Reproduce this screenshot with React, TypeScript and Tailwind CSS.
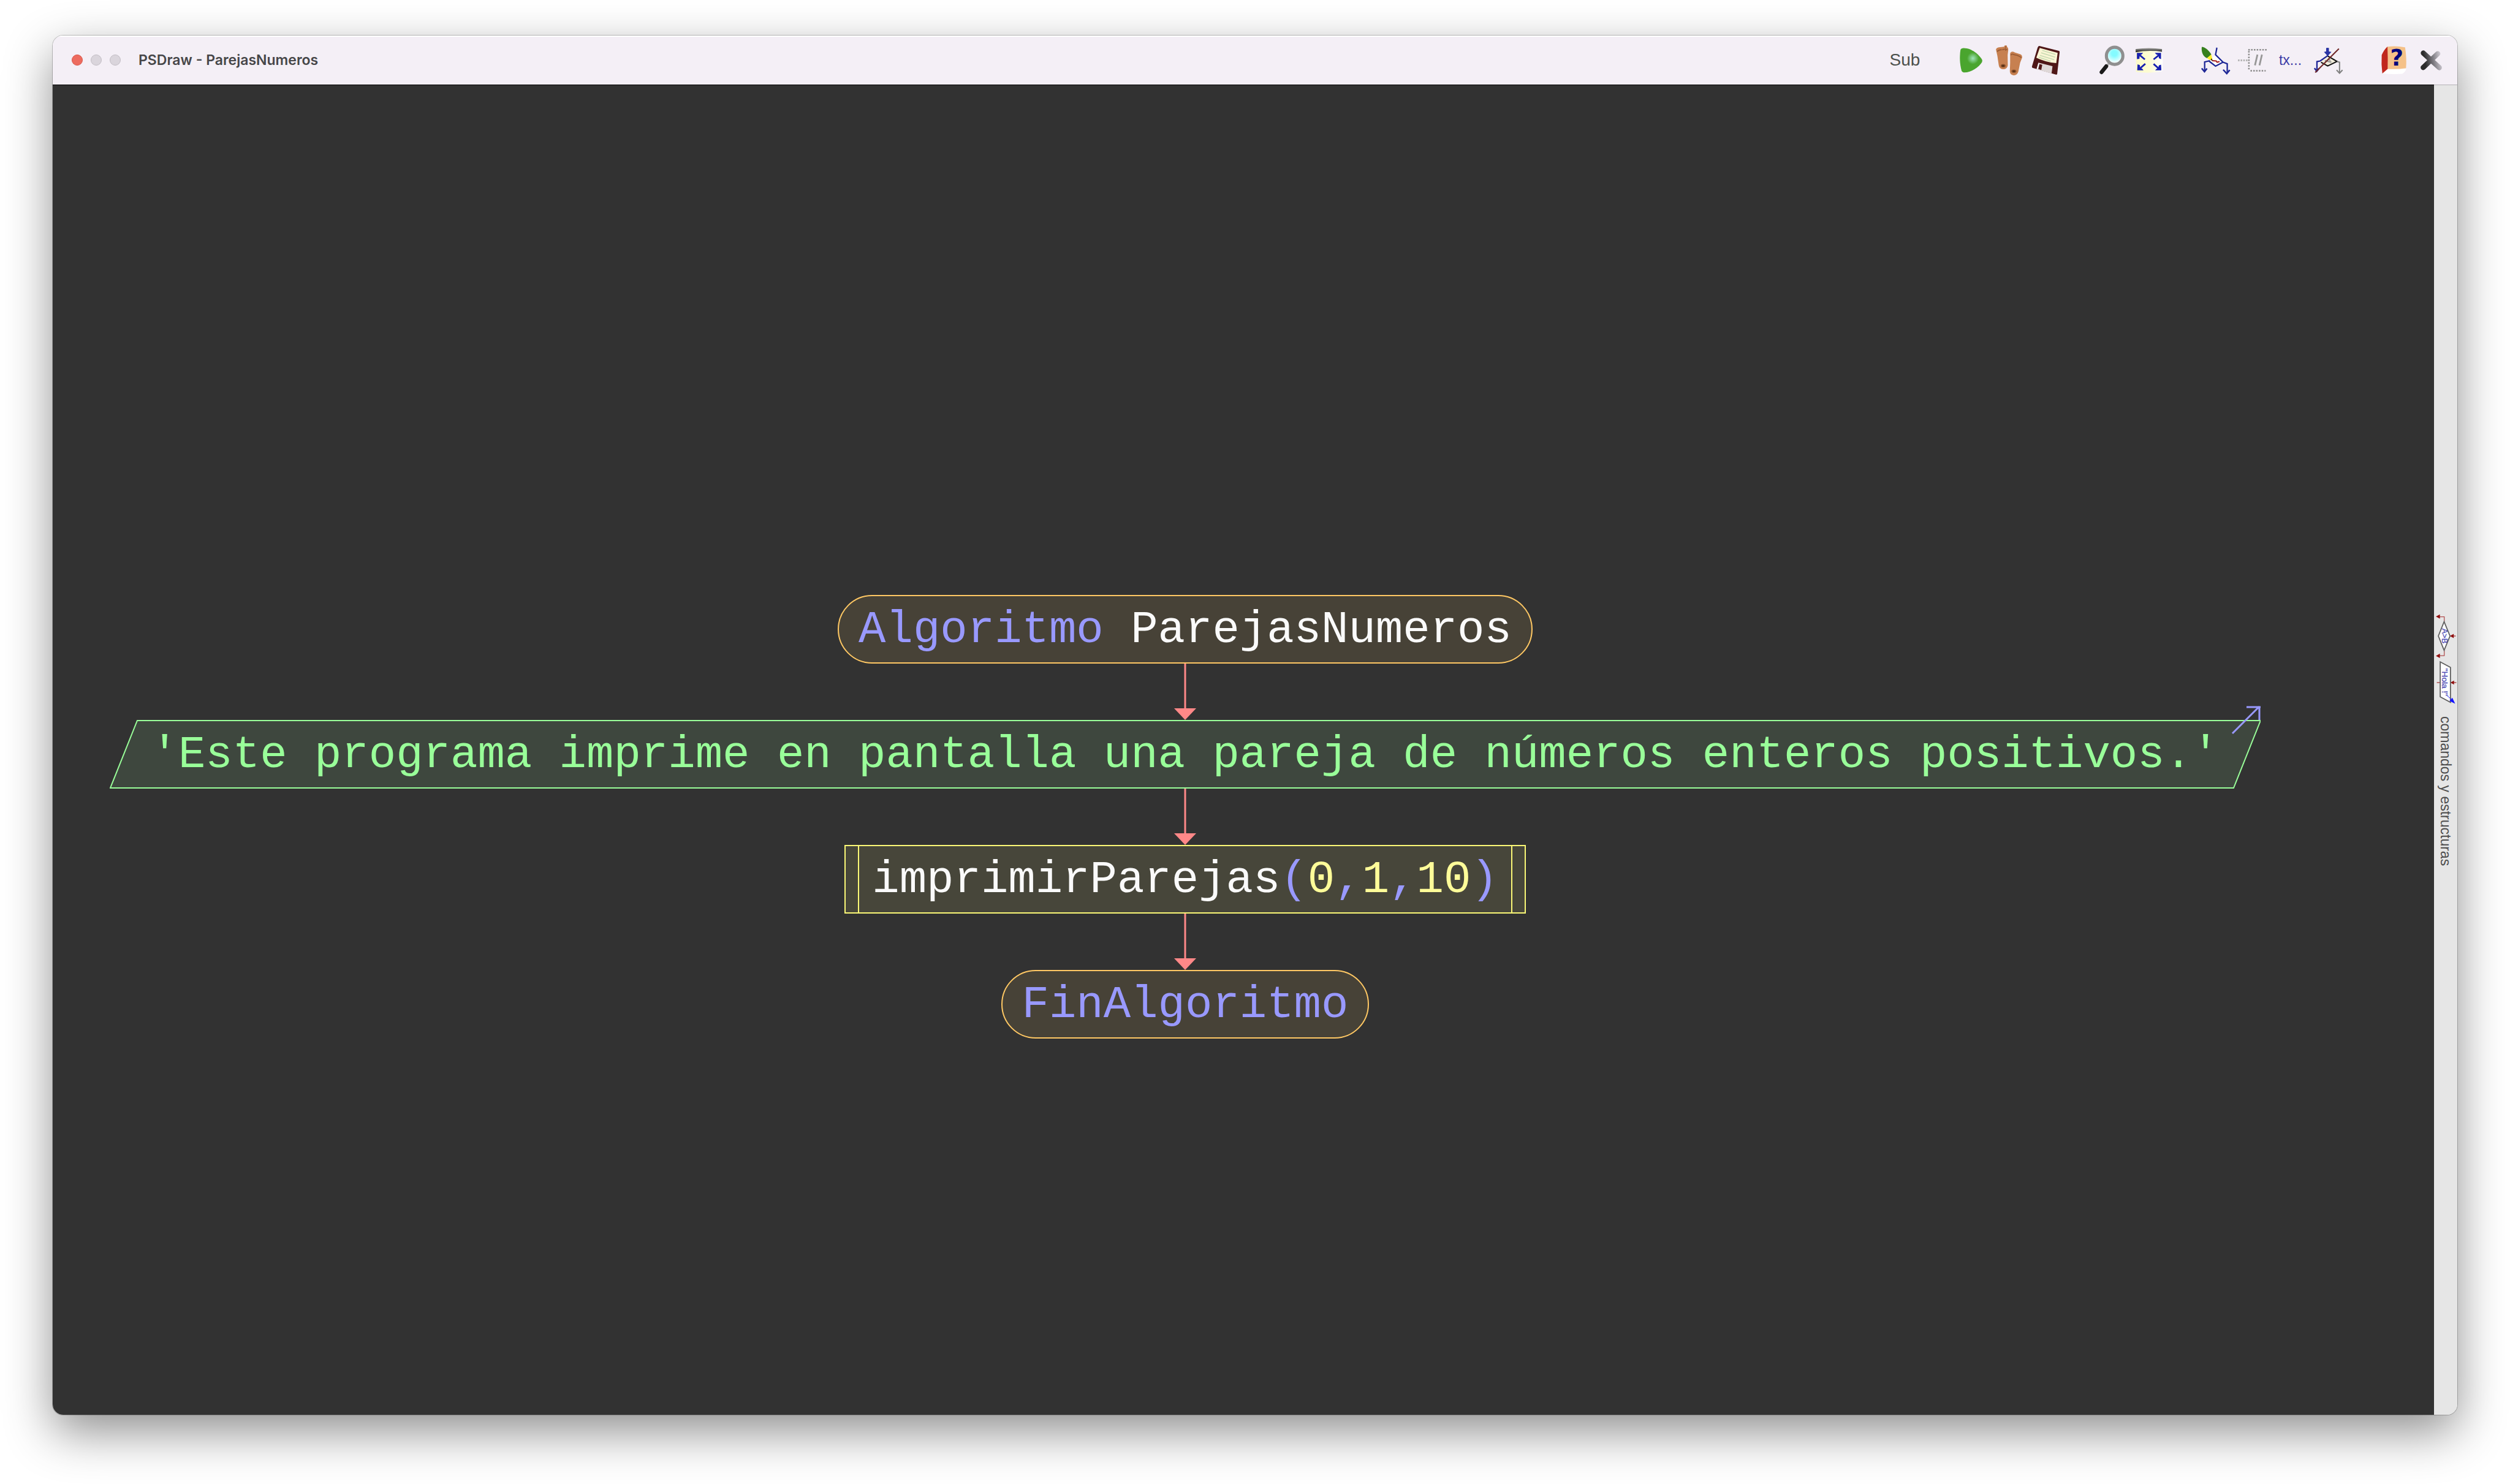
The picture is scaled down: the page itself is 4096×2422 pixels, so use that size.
import type { ReactNode } from "react";

function ToolButton({ label, children }: { label: string; children: ReactNode }) {
  return (
    <button
      type="button"
      aria-label={label}
      title={label}
      className="flex h-[61px] w-[61px] shrink-0 items-center justify-center"
    >
      {children}
    </button>
  );
}

function Glyph({ x, children }: { x: number; children: ReactNode }) {
  return (
    <svg viewBox={`${x} 54 240 240`} className="h-full w-full" fill="none" aria-hidden="true">
      {children}
    </svg>
  );
}

function PlayIcon() {
  return (
    <Glyph x={498}>
      <defs>
        <radialGradient id="playShine" gradientUnits="userSpaceOnUse" cx="630" cy="161" r="38">
          <stop offset="0" stopColor="#9fe3bb" />
          <stop offset="1" stopColor="#4aa52e" />
        </radialGradient>
      </defs>
      <path
        d="M565 96 C620 92 668 138 688 168 Q693 176 688 186 C668 218 620 254 570 252 Q560 251 557 240 C545 195 544 150 550 108 Q552 97 565 96 Z"
        fill="url(#playShine)"
      />
    </Glyph>
  );
}

function FeetIcon() {
  return (
    <Glyph x={738}>
      <path
        d="M778 104 Q781 93 796 90 L830 86 L835 78 L847 79 L850 88 Q858 92 857 106 L853 140 L854 205 Q851 231 824 231 Q799 229 796 205 L787 145 Z"
        fill="#c78050"
      />
      <path
        d="M869 128 Q876 116 890 119 L900 124 L934 135 Q947 140 946 156 L933 190 L922 245 Q916 270 892 270 Q868 268 867 245 L869 190 Z"
        fill="#c78050"
      />
      <path d="M785 117 Q800 103 815 107 M818 107 L835 102 M836 107 L851 105" stroke="#9a5b34" strokeWidth="7" />
      <path d="M873 141 Q880 130 892 137 L915 142 Q930 148 941 156" stroke="#9a5b34" strokeWidth="7" />
      <path d="M840 82 V112" stroke="#9a5b34" strokeWidth="5" />
      <ellipse cx="824" cy="209" rx="16" ry="11" fill="#8f5630" />
      <ellipse cx="824" cy="209" rx="9" ry="6" fill="#583016" />
      <ellipse cx="893" cy="244" rx="16" ry="11" fill="#8f5630" />
      <ellipse cx="893" cy="244" rx="9" ry="6" fill="#583016" />
    </Glyph>
  );
}

function FloppyIcon() {
  return (
    <Glyph x={978}>
      <path
        d="M1057 82 L1182 113 Q1188 115 1187 121 L1171 262 Q1170 267 1163 265 L1013 222 Q1008 220 1009 213 L1045 93 Q1049 81 1057 82 Z"
        fill="#4f1717"
      />
      <path d="M1059 94 L1174 126 L1165 192 Q1095 185 1037 157 Z" fill="#fbf6d6" />
      <path
        d="M1075 110 L1160 136 M1068 125 L1158 154 M1060 142 L1152 170 M1052 154 L1130 180"
        stroke="#cbdcb4"
        strokeWidth="7"
      />
      <path d="M1050 189 L1141 211 L1135 259 L1039 231 Z" fill="#dfd8d8" />
      <path d="M1057 198 L1075 203 L1069 236 L1050 230 Z" fill="#4f1717" />
      <path d="M1053 196 L1042 229" stroke="#ffffff" strokeWidth="6" />
    </Glyph>
  );
}

function LoupeIcon() {
  return (
    <Glyph x={78}>
      <defs>
        <radialGradient id="lens" gradientUnits="userSpaceOnUse" cx="213" cy="130" r="58">
          <stop offset="0.3" stopColor="#84fbff" />
          <stop offset="1" stopColor="#f4ffff" />
        </radialGradient>
      </defs>
      <path d="M184 188 L160 214" stroke="#b5b5b5" strokeWidth="14" />
      <path d="M161 212 L131 250" stroke="#1a1a1a" strokeWidth="25" strokeLinecap="round" />
      <ellipse cx="215" cy="145" rx="53" ry="55" fill="url(#lens)" stroke="#8f8f8f" strokeWidth="20" />
    </Glyph>
  );
}

function FitIcon() {
  return (
    <Glyph x={318}>
      <defs>
        <linearGradient id="sheet" x1="0" x2="1" y1="0" y2="0">
          <stop offset="0" stopColor="#fcfbc8" />
          <stop offset="0.5" stopColor="#fdfcd2" />
          <stop offset="1" stopColor="#ffffff" />
        </linearGradient>
        <linearGradient id="rim" x1="0" x2="0" y1="0" y2="1">
          <stop offset="0" stopColor="#a5a5a0" />
          <stop offset="1" stopColor="#161616" />
        </linearGradient>
      </defs>
      <path d="M353 112 H516 L524 180 L520 245 Q435 260 352 248 Z" fill="url(#sheet)" />
      <path d="M350 101 Q435 89 519 101 V119 Q435 106 350 122 Z" fill="url(#rim)" />
      <g stroke="#1820b0" strokeWidth="11">
        <path d="M372 137 L409 168 M500 140 L465 168 M375 228 L412 196 M500 228 L465 197" />
      </g>
      <g fill="#1820b0">
        <path d="M358 126 H398 L388 137 L376 142 L374 164 L358 166 Z" />
        <path d="M513 126 H473 L483 137 L497 142 L499 160 L513 166 Z" />
        <path d="M360 238 H400 L392 227 L379 223 L377 204 L362 200 Z" />
        <path d="M515 238 H475 L486 227 L495 222 L499 206 L513 202 Z" />
      </g>
    </Glyph>
  );
}

function BrushFlowIcon() {
  return (
    <Glyph x={738}>
      <path d="M866 95 L858 138 L906 186 L858 211 L815 178 L858 138" fill="#ffffff" />
      <path
        d="M870 97 H861 M866 96 L858 138 L906 186 L858 211 L815 178 M906 186 L933 196 V250 M822 176 L788 184 V240"
        stroke="#1e2796"
        strokeWidth="9"
      />
      <path d="M769 225 L787 247 L803 226 M907 234 L930 259 L949 236" stroke="#1e2796" strokeWidth="10" />
      <path d="M836 176 L862 178 L868 186 L884 182" stroke="#a82020" strokeWidth="8" />
      <path d="M769 92 Q769 84 780 89 C800 96 822 118 831 137 L804 160 C775 148 767 118 769 92 Z" fill="#37801f" />
      <path d="M830 137 L838 168 L822 172 L803 159 Z" fill="#fff02a" />
      <path d="M832 160 L842 178 L826 172 Z" fill="#3c2a12" />
    </Glyph>
  );
}

function CommentIcon() {
  return (
    <Glyph x={-12}>
      <g stroke="#8c8c8c" strokeWidth="10" strokeDasharray="10 8">
        <path d="M196 106 H78" />
        <path d="M82 114 V240" />
        <path d="M92 241 H190" />
      </g>
      <path d="M12 174 H76" stroke="#b4b4b4" strokeWidth="12" strokeDasharray="10 7" />
      <path d="M137 137 L121 206 M166 137 L150 206" stroke="#979797" strokeWidth="11" />
    </Glyph>
  );
}

function ClassicFlowIcon() {
  return (
    <Glyph x={468}>
      <path d="M588 146 L645 181 L588 210 L540 178 Z" fill="#f1ecdc" />
      <path d="M588 146 L648 181 L588 210 L545 186" stroke="#141414" strokeWidth="8" />
      <path d="M570 176 L612 186 M590 165 L606 175" stroke="#8f8f8f" strokeWidth="8" />
      <path d="M648 182 L664 186 V252 M645 236 L664 257 L683 236" stroke="#808080" strokeWidth="8" />
      <path d="M587 94 V134 M588 144 L540 178 L519 182 V236" stroke="#1c2496" strokeWidth="9" />
      <path d="M578 94 H596 V117 L612 120 L588 146 L564 120 L578 117 Z" fill="#2a34a4" />
      <path d="M503 224 L518 244 L532 226" stroke="#1c2496" strokeWidth="9" />
      <path d="M660 99 L508 252" stroke="#6e2626" strokeWidth="8" />
    </Glyph>
  );
}

function HelpIcon() {
  return (
    <Glyph x={888}>
      <path d="M968 228 H1088 Q1082 248 1062 261 Q1000 266 932 258 Z" fill="#ffffff" />
      <path d="M967 86 Q1025 80 1080 90 Q1091 160 1086 224 Q1030 233 967 229 Z" fill="#f5c188" />
      <path d="M967 85 Q970 160 968 229 L934 259 Q926 200 930 140 Q942 108 967 85 Z" fill="#c0271c" />
      <text
        x="1027"
        y="208"
        textAnchor="middle"
        fontSize="146"
        fill="#03067c"
        className="font-['DejaVu_Sans'] font-bold"
      >
        ?
      </text>
    </Glyph>
  );
}

function CloseIcon() {
  return (
    <Glyph x={1128}>
      <defs>
        <linearGradient id="cross" gradientUnits="userSpaceOnUse" x1="1180" y1="190" x2="1318" y2="165">
          <stop offset="0.2" stopColor="#2c2c2c" />
          <stop offset="0.55" stopColor="#76747a" />
          <stop offset="1" stopColor="#d6d2da" />
        </linearGradient>
      </defs>
      <path d="M1197 127 L1300 221 M1290 131 L1196 220" stroke="url(#cross)" strokeWidth="33" strokeLinecap="round" />
    </Glyph>
  );
}

function Toolbar() {
  return (
    <div className="flex items-center gap-[47px] text-[#4c504c]">
      <ToolButton label="Subprocesos">
        <span className="font-['Liberation_Sans',sans-serif] text-[28px] leading-none">Sub</span>
      </ToolButton>
      <div className="flex">
        <ToolButton label="Ejecutar">
          <PlayIcon />
        </ToolButton>
        <ToolButton label="Paso a paso">
          <FeetIcon />
        </ToolButton>
        <ToolButton label="Guardar">
          <FloppyIcon />
        </ToolButton>
      </div>
      <div className="flex">
        <ToolButton label="Zoom">
          <LoupeIcon />
        </ToolButton>
        <ToolButton label="Ajustar">
          <FitIcon />
        </ToolButton>
      </div>
      <div className="flex">
        <ToolButton label="Colores">
          <BrushFlowIcon />
        </ToolButton>
        <ToolButton label="Comentarios">
          <CommentIcon />
        </ToolButton>
        <ToolButton label="Textos">
          <span className="font-['Liberation_Sans',sans-serif] text-[23px] leading-none text-[#3c3ca6]">tx...</span>
        </ToolButton>
        <ToolButton label="Estilo">
          <ClassicFlowIcon />
        </ToolButton>
      </div>
      <div className="flex">
        <ToolButton label="Ayuda">
          <HelpIcon />
        </ToolButton>
        <ToolButton label="Cerrar editor">
          <CloseIcon />
        </ToolButton>
      </div>
    </div>
  );
}

function TitleBar() {
  return (
    <header className="flex h-20 items-center justify-between border-t-2 border-white bg-[#f4eff6] pr-3 pb-[2px] pl-[31px]">
      <div className="flex items-center">
        <div className="flex gap-[13px]">
          <button type="button" aria-label="Cerrar" className="size-[18px] rounded-full border border-[#d9584b] bg-[#ed6b5f]" />
          <button type="button" aria-label="Minimizar" className="size-[18px] rounded-full border border-[#c3bec5] bg-[#dad5dc]" />
          <button type="button" aria-label="Maximizar" className="size-[18px] rounded-full border border-[#c3bec5] bg-[#dad5dc]" />
        </div>
        <h1 className="ml-[29px] font-['Inter',sans-serif] text-[23px] leading-8 font-semibold text-[#464648]">
          PSDraw - ParejasNumeros
        </h1>
      </div>
      <Toolbar />
    </header>
  );
}

function Connector() {
  return (
    <svg width="36" height="92" viewBox="0 0 36 92" className="block" aria-hidden="true">
      <path d="M18 0 V76" stroke="#ff8888" strokeWidth="3" />
      <path d="M0 73 H36 L18 92 Z" fill="#ff8888" />
    </svg>
  );
}

function Terminal({ children }: { children: ReactNode }) {
  return (
    <div className="flex h-28 items-center rounded-full border-2 border-[#ffc864] bg-[#474237] px-8 pt-[2px]">
      {children}
    </div>
  );
}

function OutputNode({ children }: { children: ReactNode }) {
  return (
    <div className="relative flex h-28 items-center px-[68px] pt-[2px] text-[#99ff99]">
      <svg
        viewBox="0 0 3512 112"
        preserveAspectRatio="none"
        className="absolute inset-0 h-full w-full"
        aria-hidden="true"
      >
        <path
          d="M45 1 H3511 L3467 111 H1 Z"
          fill="#3e473e"
          stroke="#99ff99"
          strokeWidth="2"
          vectorEffect="non-scaling-stroke"
        />
      </svg>
      <svg viewBox="0 0 48 48" className="absolute -top-6 right-0 size-12" fill="none" aria-hidden="true">
        <path d="M2 46 L46 2 M25 3 H48 M46 2 V24" stroke="#9999ff" strokeWidth="3" />
      </svg>
      <span className="relative">{children}</span>
    </div>
  );
}

function CallNode({ children }: { children: ReactNode }) {
  return (
    <div className="flex h-28 border-2 border-[#fbf876] bg-[#47463a] px-5">
      <div className="flex items-center border-x-2 border-[#fbf876] px-[21px] pt-[2px]">{children}</div>
    </div>
  );
}

function Flowchart() {
  return (
    <main className="flex flex-1 flex-col items-center justify-center border-t border-black bg-[#323232] pt-[218px] pr-[190px] font-['Liberation_Mono',monospace] text-[74px] leading-[100px] whitespace-pre text-[#fafafa]">
      <Terminal>
        <p>
          <span className="text-[#9999ff]">Algoritmo</span> ParejasNumeros
        </p>
      </Terminal>
      <Connector />
      <OutputNode>'Este programa imprime en pantalla una pareja de números enteros positivos.'</OutputNode>
      <Connector />
      <CallNode>
        <p className="text-[#9999ff]">
          <span className="text-[#fafafa]">imprimirParejas</span>(<span className="text-[#fffc99]">0</span>,
          <span className="text-[#fffc99]">1</span>,<span className="text-[#fffc99]">10</span>)
        </p>
      </CallNode>
      <Connector />
      <Terminal>
        <p className="text-[#9999ff]">FinAlgoritmo</p>
      </Terminal>
    </main>
  );
}

function CommandsArt() {
  return (
    <svg viewBox="36 40 150 600" className="block h-[153px] w-[38px]" fill="none" aria-hidden="true">
      <path d="M102 96 V64 H72 M102 280 V315 H72 M176 188 H160 M180 488 H160 M54 488 H74" stroke="#b05050" strokeWidth="5" />
      <path
        d="M48 63 L74 49 V77 Z M48 316 L74 302 V330 Z M138 188 L163 174 V202 Z M141 488 L165 475 V501 Z"
        fill="#8f0f0f"
      />
      <path d="M101 96 L139 188 L101 280 L64 188 Z" fill="#ffffff" stroke="#5e5e5e" strokeWidth="7" />
      <path d="M76 355 L142 390 V615 L76 580 Z" fill="#ffffff" stroke="#5e5e5e" strokeWidth="7" />
      <g className="font-['Liberation_Sans',sans-serif]" fill="#4a48b4" stroke="#4a48b4">
        <text transform="translate(86 140) rotate(90)" fontSize="50">
          A&gt;B
        </text>
        <text transform="translate(88 396) rotate(90)" fontSize="54">
          "Hola !"
        </text>
      </g>
      <path d="M124 574 L150 602" stroke="#2020ff" strokeWidth="5" strokeDasharray="7 4" />
      <path d="M172 624 L136 606 L154 586 Z" fill="#1414ff" />
    </svg>
  );
}

function CommandsTab() {
  return (
    <aside className="flex w-[38px] flex-col border-t border-[#b4b1b6] bg-[#e6e6e6]">
      <button
        type="button"
        className="flex flex-1 flex-col items-center justify-center gap-4 pb-[34px] text-[#4d4d4d]"
      >
        <CommandsArt />
        <span className="font-['Liberation_Sans',sans-serif] text-[23px] leading-[38px] [writing-mode:vertical-rl]">
          comandos y estructuras
        </span>
      </button>
    </aside>
  );
}

export default function App() {
  return (
    <div className="flex min-h-screen bg-white px-[86px] pt-[58px] pb-[113px]">
      <div className="flex flex-1 flex-col overflow-hidden rounded-[17px] shadow-[0_0_0_1px_rgba(0,0,0,0.22),0_28px_78px_rgba(0,0,0,0.44)]">
        <TitleBar />
        <div className="flex flex-1">
          <Flowchart />
          <CommandsTab />
        </div>
      </div>
    </div>
  );
}
